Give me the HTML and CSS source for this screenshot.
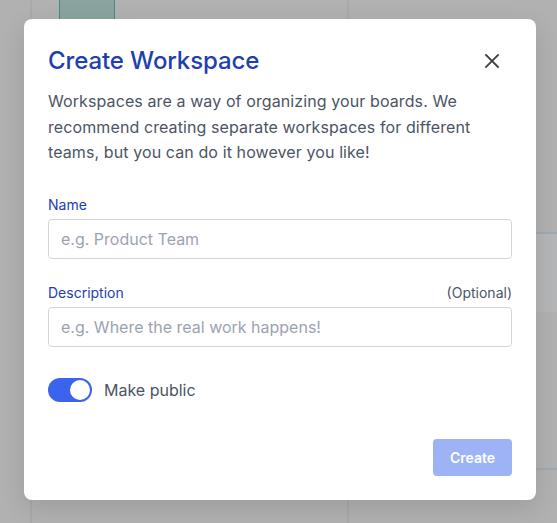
FILE: index.html
```html
<!DOCTYPE html>
<html>
<head>
<meta charset="utf-8">
<link rel="stylesheet" href="styles.css">
</head>
<body>
<div class="board">
  <div class="col col-a"></div>
  <div class="col col-b"><div class="teal"></div></div>
  <div class="col col-c"></div>
  <div class="col col-d">
    <div class="card"><div class="card-lines"></div></div>
    <div class="col-d-rest"></div>
  </div>
</div>
<div class="overlay">
  <div class="modal">
    <div class="modal-head">
      <h1 class="title">Create Workspace</h1>
      <button class="close" aria-label="Close">
        <svg width="16" height="16" viewBox="0 0 16 16"><path d="M2 2L14 14M14 2L2 14" stroke="#3f3f46" stroke-width="1.8" stroke-linecap="square"/></svg>
      </button>
    </div>
    <p class="intro">Workspaces are a way of organizing your boards. We recommend creating separate workspaces for different teams, but you can do it however you like!</p>
    <div class="field">
      <div class="label-row"><label class="label">Name</label></div>
      <input class="input" placeholder="e.g. Product Team">
    </div>
    <div class="field">
      <div class="label-row"><label class="label">Description</label><span class="optional">(Optional)</span></div>
      <input class="input" placeholder="e.g. Where the real work happens!">
    </div>
    <div class="toggle-row">
      <span class="toggle"><span class="knob"></span></span>
      <span class="toggle-label">Make public</span>
    </div>
    <div class="actions">
      <button class="create">Create</button>
    </div>
  </div>
</div>
</body>
</html>
```
FILE: styles.css
```css
* { box-sizing: border-box; }
html, body { margin: 0; padding: 0; height: 100%; }
body {
  font-family: Inter, "Noto Sans", sans-serif;
  background: #b1b1b1;
  overflow: hidden;
  position: relative;
}
.board {
  display: flex;
  height: 100%;
}
.col { height: 100%; }
.col-a { width: 32px; border-right: 2px solid #a9a9a9; }
.col-b { width: 317px; border-right: 2px solid #a9a9a9; padding-left: 27px; }
.teal {
  width: 56px;
  height: 40px;
  background: #8aa39f;
  border-left: 1px solid #3f8f80;
  border-right: 1px solid #3f8f80;
}
.col-c { flex: 1; }
.col-d { width: 21px; display: flex; flex-direction: column; padding-top: 232px; }
.card {
  height: 80px;
  border-top: 2px solid #9eaab3;
  background: #b4b6b8;
}
.col-d-rest {
  height: 158px;
  border-bottom: 2px solid #9eaab3;
}
.overlay {
  position: absolute;
  inset: 0;
  padding: 19px 21px 0 24px;
}
.modal {
  width: 512px;
  height: 481px;
  background: #fff;
  border-radius: 8px;
  box-shadow: 0 8px 24px rgba(0,0,0,0.12);
  padding: 28px 24px 24px 24px;
  display: flex;
  flex-direction: column;
}
.modal-head {
  display: flex;
  justify-content: space-between;
  align-items: center;
}
.title {
  margin: 0;
  font-size: 24px;
  line-height: 28px;
  font-weight: 500;
  color: #1e40af;
  letter-spacing: -0.1px;
}
.close {
  border: 0;
  background: none;
  padding: 0;
  margin-right: 12px;
  width: 16px;
  height: 16px;
  display: flex;
}
.intro {
  margin: 14px 0 0;
  font-size: 16px;
  line-height: 25.5px;
  color: #4b5563;
  letter-spacing: 0.1px;
}
.field { margin-top: 29px; }
.field + .field { margin-top: 24px; }
.label-row {
  display: flex;
  justify-content: space-between;
  align-items: baseline;
  height: 20px;
  margin-bottom: 4px;
}
.label { font-size: 14px; line-height: 20px; color: #1e40af; }
.optional { font-size: 14px; line-height: 20px; color: #4b5563; }
.input {
  display: block;
  width: 100%;
  height: 40px;
  border: 1px solid #d1d5db;
  border-radius: 4px;
  padding: 0 12px;
  font-family: inherit;
  font-size: 16px;
  color: #111827;
  outline: none;
}
.input::placeholder { color: #9ca3af; }
.toggle-row {
  display: flex;
  align-items: center;
  gap: 12px;
  margin-top: 31px;
}
.toggle {
  width: 44px;
  height: 24px;
  border-radius: 12px;
  background: #3b63ec;
  display: flex;
  justify-content: flex-end;
  padding: 2px;
}
.knob {
  width: 20px;
  height: 20px;
  border-radius: 50%;
  background: #fff;
}
.toggle-label { font-size: 16px; color: #4b5563; }
.actions {
  margin-top: auto;
  display: flex;
  justify-content: flex-end;
}
.create {
  width: 79px;
  height: 37px;
  border: 0;
  border-radius: 4px;
  background: #9db3f5;
  color: #fff;
  font-family: inherit;
  font-size: 14px;
  font-weight: 600;
}
```
